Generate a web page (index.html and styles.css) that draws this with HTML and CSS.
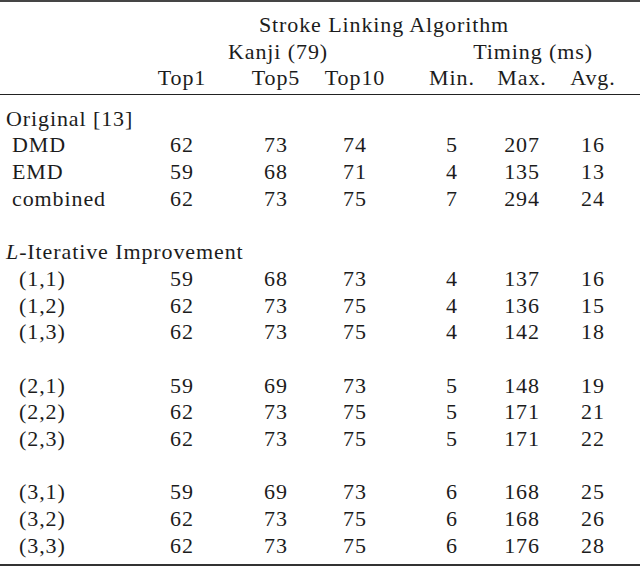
FILE: index.html
```html
<!DOCTYPE html>
<html>
<head>
<meta charset="utf-8">
<link rel="stylesheet" href="styles.css">
</head>
<body>
<div class="table">
  <div class="head">
    <div class="row">
      <div class="cell label"></div>
      <div class="cell span-all">Stroke Linking Algorithm</div>
    </div>
    <div class="row">
      <div class="cell label"></div>
      <div class="cell span-kanji">Kanji (79)</div>
      <div class="cell span-timing">Timing (ms)</div>
    </div>
    <div class="row">
      <div class="cell label"></div>
      <div class="cell">Top1</div>
      <div class="cell">Top5</div>
      <div class="cell">Top10</div>
      <div class="cell">Min.</div>
      <div class="cell">Max.</div>
      <div class="cell">Avg.</div>
    </div>
  </div>
  <div class="body">
    <div class="row"><div class="cell label sec">Original [13]</div></div>
    <div class="row"><div class="cell label sub">DMD</div><div class="cell">62</div><div class="cell">73</div><div class="cell">74</div><div class="cell">5</div><div class="cell">207</div><div class="cell">16</div></div>
    <div class="row"><div class="cell label sub">EMD</div><div class="cell">59</div><div class="cell">68</div><div class="cell">71</div><div class="cell">4</div><div class="cell">135</div><div class="cell">13</div></div>
    <div class="row"><div class="cell label sub">combined</div><div class="cell">62</div><div class="cell">73</div><div class="cell">75</div><div class="cell">7</div><div class="cell">294</div><div class="cell">24</div></div>
    <div class="row blank"></div>
    <div class="row"><div class="cell label sec"><i>L</i>-Iterative Improvement</div></div>
    <div class="row"><div class="cell label pair">(1,1)</div><div class="cell">59</div><div class="cell">68</div><div class="cell">73</div><div class="cell">4</div><div class="cell">137</div><div class="cell">16</div></div>
    <div class="row"><div class="cell label pair">(1,2)</div><div class="cell">62</div><div class="cell">73</div><div class="cell">75</div><div class="cell">4</div><div class="cell">136</div><div class="cell">15</div></div>
    <div class="row"><div class="cell label pair">(1,3)</div><div class="cell">62</div><div class="cell">73</div><div class="cell">75</div><div class="cell">4</div><div class="cell">142</div><div class="cell">18</div></div>
    <div class="row blank"></div>
    <div class="row"><div class="cell label pair">(2,1)</div><div class="cell">59</div><div class="cell">69</div><div class="cell">73</div><div class="cell">5</div><div class="cell">148</div><div class="cell">19</div></div>
    <div class="row"><div class="cell label pair">(2,2)</div><div class="cell">62</div><div class="cell">73</div><div class="cell">75</div><div class="cell">5</div><div class="cell">171</div><div class="cell">21</div></div>
    <div class="row"><div class="cell label pair">(2,3)</div><div class="cell">62</div><div class="cell">73</div><div class="cell">75</div><div class="cell">5</div><div class="cell">171</div><div class="cell">22</div></div>
    <div class="row blank"></div>
    <div class="row"><div class="cell label pair">(3,1)</div><div class="cell">59</div><div class="cell">69</div><div class="cell">73</div><div class="cell">6</div><div class="cell">168</div><div class="cell">25</div></div>
    <div class="row"><div class="cell label pair">(3,2)</div><div class="cell">62</div><div class="cell">73</div><div class="cell">75</div><div class="cell">6</div><div class="cell">168</div><div class="cell">26</div></div>
    <div class="row"><div class="cell label pair">(3,3)</div><div class="cell">62</div><div class="cell">73</div><div class="cell">75</div><div class="cell">6</div><div class="cell">176</div><div class="cell">28</div></div>
  </div>
</div>
</body>
</html>
```

FILE: styles.css
```css
html, body {
  margin: 0;
  padding: 0;
  background: #ffffff;
}

.table {
  width: 640px;
  font-family: "Liberation Serif", "Times New Roman", serif;
  font-size: 22px;
  letter-spacing: 0.9px;
  color: #1c1c1c;
}

.head {
  border-top: 2px solid #454545;
  border-bottom: 1px solid #222222;
  padding-top: 10px;
  padding-bottom: 2px;
}

.body {
  padding-top: 11px;
  padding-bottom: 5px;
  border-bottom: 2px solid #333333;
}

.head .row {
  height: 26.6px;
  line-height: 26.6px;
}

.row {
  display: grid;
  grid-template-columns: 114px 136px 52px 106px 88px 52px 90px;
  height: 26.7px;
  line-height: 26.7px;
}

.cell {
  display: flex;
  justify-content: center;
  white-space: nowrap;
  min-width: 0;
}

.label {
  justify-content: flex-start;
}

.sec {
  padding-left: 6px;
}

.sub {
  padding-left: 12px;
}

.pair {
  padding-left: 19px;
}

.span-all {
  grid-column: 2 / 8;
  padding-left: 16px;
}

.span-kanji {
  grid-column: 2 / 5;
  padding-left: 34px;
}

.span-timing {
  grid-column: 5 / 8;
  padding-left: 20px;
}
```
